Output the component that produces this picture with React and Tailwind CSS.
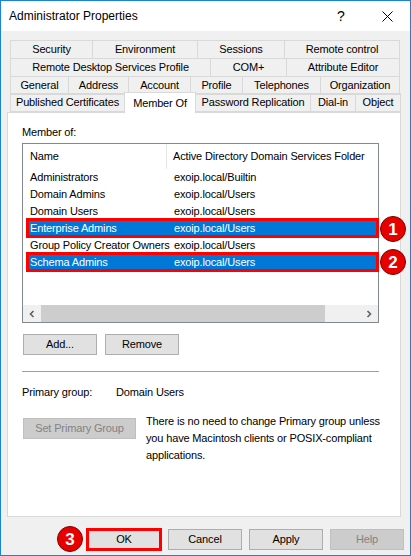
const tabRows = [
  [
    ['Security', 82],
    ['Environment', 105],
    ['Sessions', 87],
    ['Remote control', 115],
  ],
  [
    ['Remote Desktop Services Profile', 200],
    ['COM+', 76],
    ['Attribute Editor', 113],
  ],
  [
    ['General', 58],
    ['Address', 60],
    ['Account', 62],
    ['Profile', 52],
    ['Telephones', 78],
    ['Organization', 79],
  ],
];

const lastRow = [
  ['Published Certificates', 114],
  ['Member Of', 71, true],
  ['Password Replication', 115],
  ['Dial-in', 45],
  ['Object', 45],
];

const groups = [
  ['Administrators', 'exoip.local/Builtin'],
  ['Domain Admins', 'exoip.local/Users'],
  ['Domain Users', 'exoip.local/Users'],
  ['Enterprise Admins', 'exoip.local/Users', 1],
  ['Group Policy Creator Owners', 'exoip.local/Users'],
  ['Schema Admins', 'exoip.local/Users', 2],
];

const Badge = ({ n, className = '' }) => (
  <div
    className={`w-[26px] h-[26px] rounded-full bg-[#e60000] border border-[#7a0000] text-white font-bold text-[17px] tracking-normal leading-none flex items-center justify-center ${className}`}
  >
    {n}
  </div>
);

const Button = ({ children, width = 'w-[74px]', disabled, marked }) => (
  <div className="relative">
    <div
      className={`${width} h-[21px] flex items-center justify-center border ${
        disabled
          ? 'bg-[#cccccc] border-[#bfbfbf] text-[#838383]'
          : 'bg-[#e1e1e1] border-[#adadad] text-black'
      }`}
    >
      {children}
    </div>
    {marked && (
      <div className="absolute -inset-px border-[3px] border-[#ff0000] pointer-events-none"></div>
    )}
  </div>
);

const Chevron = ({ left }) => (
  <svg width="8" height="8" viewBox="0 0 8 8">
    <path
      d={left ? 'M5.5 1 L2.5 4 L5.5 7' : 'M2.5 1 L5.5 4 L2.5 7'}
      fill="none"
      stroke="#606060"
      strokeWidth="1.6"
    />
  </svg>
);

export default function App() {
  return (
    <div
      className="w-[411px] h-[556px] border border-[#1883d7] bg-[#f0f0f0] flex flex-col text-[11px] tracking-[-0.15px] text-black overflow-hidden"
      style={{ fontFamily: '"Liberation Sans", Arial, sans-serif' }}
    >
      {/* title bar */}
      <div className="h-[30px] bg-white flex items-center shrink-0 text-[12px] tracking-normal">
        <div className="pl-[8px] flex-1 -mt-px">Administrator Properties</div>
        <div className="w-[46px] text-center text-[14px]">?</div>
        <div className="w-[46px] flex justify-center">
          <svg width="11" height="11" viewBox="0 0 11 11">
            <path d="M0.5 0.5 L10.5 10.5 M10.5 0.5 L0.5 10.5" stroke="#000" strokeWidth="1" />
          </svg>
        </div>
      </div>

      {/* tabs */}
      <div className="pt-[9px] pl-[9px] flex flex-col">
        {tabRows.map((row, i) => (
          <div key={i} className="flex h-[18px]">
            {row.map(([label, w]) => (
              <div
                key={label}
                className="h-[19px] shrink-0 -mr-px border border-[#d9d9d9] flex items-center justify-center whitespace-nowrap"
                style={{ width: w + 1 }}
              >
                {label}
              </div>
            ))}
          </div>
        ))}
        <div className="flex h-[18px] items-end relative z-10">
          {lastRow.map(([label, w, active]) => (
            <div
              key={label}
              className={`shrink-0 -mr-px border border-[#d9d9d9] flex justify-center whitespace-nowrap ${
                active
                  ? 'bg-white h-[21px] border-b-0 -mb-px pt-[2px] items-start'
                  : 'h-[19px] items-center'
              }`}
              style={{ width: w + 1 }}
            >
              {label}
            </div>
          ))}
        </div>
      </div>

      {/* page */}
      <div className="relative ml-[6px] w-[394px] h-[405px] shrink-0 bg-white border border-[#d9d9d9] pl-[14px] pt-[11px]">
        <div className="leading-[16px]">Member of:</div>

        <div className="relative mt-[3px] w-[357px] h-[180px] border border-[#828790] flex flex-col">
          <div className="h-[25px] flex items-center shrink-0">
            <div className="w-[144px] pl-[7px] h-full flex items-center border-r border-[#e5e5e5]">Name</div>
            <div className="pl-[6px] whitespace-nowrap">Active Directory Domain Services Folder</div>
          </div>
          {groups.map(([name, folder, mark]) => (
            <div
              key={name}
              className={`relative h-[17px] shrink-0 flex items-center ml-[6px] mr-[2px] ${
                mark ? 'bg-[#0078d7] text-white' : ''
              }`}
            >
              <div className="w-[138px] pl-[1px] whitespace-nowrap">{name}</div>
              <div className="pl-[7px] whitespace-nowrap">{folder}</div>
              {mark && (
                <div className="absolute -top-[2px] -bottom-[1px] -left-[3px] -right-[3px] border-[3px] border-[#ff0000]"></div>
              )}
            </div>
          ))}
          <div className="flex-1"></div>
          <div className="h-[17px] bg-[#f0f0f0] flex items-center shrink-0">
            <div className="w-[18px] flex justify-center">
              <Chevron left />
            </div>
            <div className="w-[284px] h-full bg-[#cdcdcd]"></div>
            <div className="flex-1"></div>
            <div className="w-[18px] flex justify-center">
              <Chevron />
            </div>
          </div>
        </div>

        <div className="flex gap-[8px] mt-[11px] pl-px">
          <Button>Add...</Button>
          <Button>Remove</Button>
        </div>

        <div className="mt-[16px] w-[357px] border-t border-[#a0a0a0]"></div>

        <div className="mt-[12px] flex leading-[16px]">
          <div className="w-[94px]">Primary group:</div>
          <div>Domain Users</div>
        </div>

        <div className="mt-[13px] flex pl-px">
          <div className="mt-[5px]">
            <Button width="w-[113px]" disabled>
              Set Primary Group
            </Button>
          </div>
          <div className="ml-[10px] w-[240px] leading-[17px]">
            There is no need to change Primary group unless you have Macintosh clients or POSIX-compliant
            applications.
          </div>
        </div>

        <Badge n="1" className="absolute left-[372px] top-[103px]" />
        <Badge n="2" className="absolute left-[372px] top-[136px]" />
      </div>

      {/* footer buttons */}
      <div className="flex items-center justify-end pr-[6px] mt-[9px]">
        <Badge n="3" className="mr-[4px]" />
        <div className="flex gap-[7px]">
          <Button marked>OK</Button>
          <Button>Cancel</Button>
          <Button>Apply</Button>
          <Button disabled>Help</Button>
        </div>
      </div>
    </div>
  );
}
